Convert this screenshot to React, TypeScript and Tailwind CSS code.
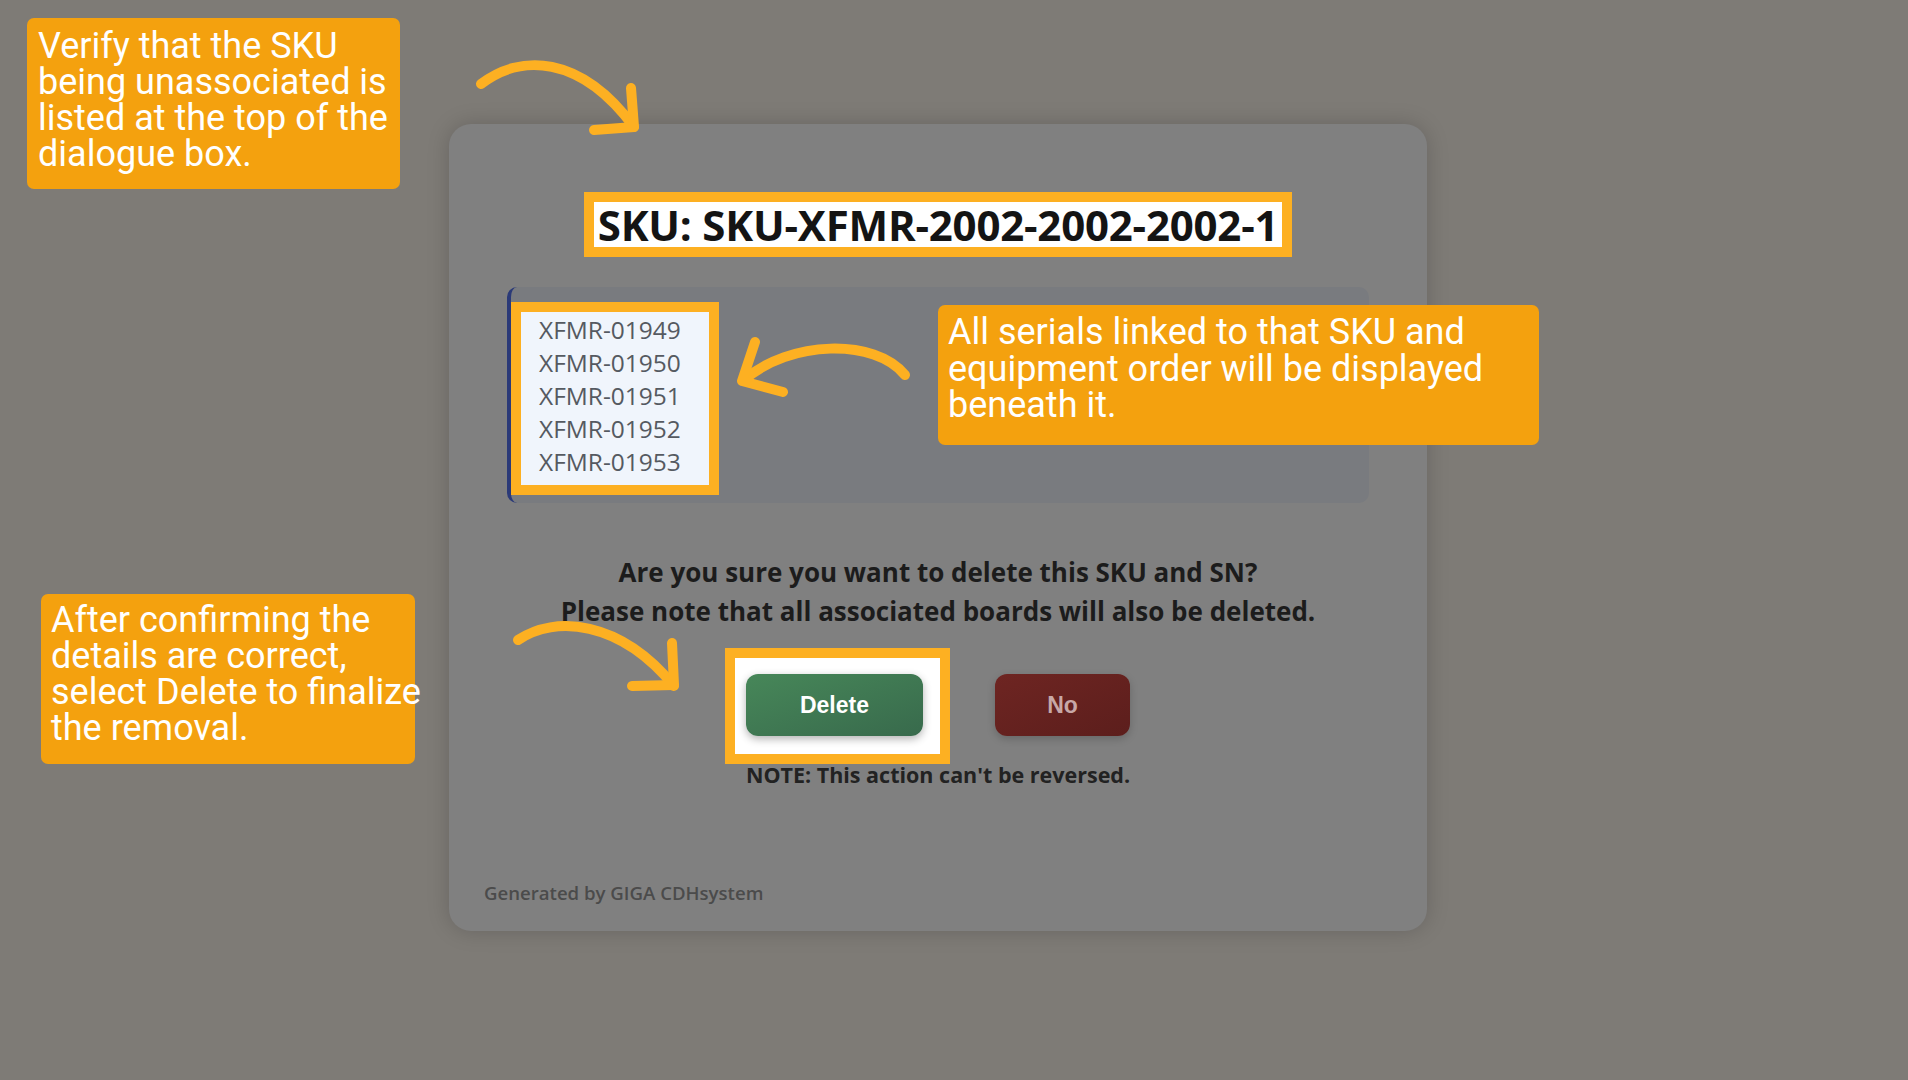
import React from "react";

const serials = ["XFMR-01949", "XFMR-01950", "XFMR-01951", "XFMR-01952", "XFMR-01953"];

function Arrows() {
  return (
    <svg
      className="absolute inset-0 pointer-events-none z-20"
      width="1908"
      height="1080"
      viewBox="0 0 1908 1080"
      fill="none"
    >
      <g stroke="#fdb022" strokeWidth="10" strokeLinecap="round" strokeLinejoin="round">
        <path d="M481 84 C520 54 580 54 634 127" />
        <path d="M594 130 L634 127 L631 88" />
        <path d="M905 375 C875 338 790 340 744 380" />
        <path d="M755 342 L742 381 L783 392" />
        <path d="M518 640 C555 615 620 620 674 686" />
        <path d="M632 686 L674 685 L672 643" />
      </g>
    </svg>
  );
}

export default function App() {
  return (
    <div className="relative w-[1908px] h-[1080px] overflow-hidden bg-[#7e7b76] font-['Open_Sans',sans-serif]">
      <div className="flex pt-[124px] pl-[449px]">
        <div className="w-[978px] h-[807px] rounded-[22px] bg-[#808080] shadow-[0_0_22px_rgba(0,0,0,0.18)] flex flex-col items-center pt-[68px]">
          <div className="border-[10px] border-[#fdb022] bg-white px-[4px] py-[1px]">
            <div className="text-[42px] leading-[43px] font-bold text-[#141414] whitespace-nowrap tracking-[-0.2px]">
              SKU: SKU-XFMR-2002-2002-2002-1
            </div>
          </div>

          <div className="mt-[30px] w-[862px] h-[216px] rounded-[10px] bg-[#797b7f] border-l-[4px] border-[#2b3a78] pt-[15px]">
            <div className="w-[208px] border-[10px] border-[#fdb022] bg-[#f0f5fc] pl-[18px] pt-[1px] pb-[7px]">
              {serials.map((s) => (
                <div key={s} className="text-[24.5px] leading-[33px] text-[#555a61] whitespace-nowrap">
                  {s}
                </div>
              ))}
            </div>
          </div>

          <div className="mt-[50px] flex flex-col items-center text-[#1c1c1c] font-bold text-[26px] leading-[39px]">
            <div className="whitespace-nowrap">Are you sure you want to delete this SKU and SN?</div>
            <div className="whitespace-nowrap">Please note that all associated boards will also be deleted.</div>
          </div>

          <div className="mt-[43px] flex items-center gap-[72px]">
            <div className="relative">
              <div className="absolute left-[-21px] top-[-26px] w-[225px] h-[116px] border-[10px] border-[#fdb022] bg-white" />
              <button className="relative z-10 w-[177px] h-[62px] rounded-[12px] bg-linear-to-br from-[#478759] to-[#386a4c] text-white font-bold text-[23px] font-['Liberation_Sans',sans-serif] shadow-[0_3px_8px_rgba(0,0,0,0.3)]">
                Delete
              </button>
            </div>
            <button className="w-[135px] h-[62px] rounded-[12px] bg-linear-to-br from-[#6e2522] to-[#5c1e1c] text-[#c7a8a7] font-bold text-[23px] font-['Liberation_Sans',sans-serif] shadow-[0_3px_8px_rgba(0,0,0,0.2)]">
              No
            </button>
          </div>

          <div className="relative z-10 mt-[25px] text-[21.5px] leading-[28px] font-bold text-[#222222] whitespace-nowrap">
            NOTE: This action can't be reversed.
          </div>

          <div className="mt-auto mb-[25px] self-stretch pl-[35px] text-[18.6px] leading-[26px] font-semibold text-[#4b4b4b]">
            Generated by GIGA CDHsystem
          </div>
        </div>
      </div>

      <div className="absolute left-[27px] top-[18px] w-[373px] h-[171px] rounded-[7px] bg-[#f4a10e] pl-[11px] pt-[10px] text-white font-['Roboto',sans-serif] text-[36px] leading-[36px] whitespace-nowrap z-30">
        <div>Verify that the SKU</div>
        <div>being unassociated is</div>
        <div>listed at the top of the</div>
        <div>dialogue box.</div>
      </div>

      <div className="absolute left-[938px] top-[305px] w-[601px] h-[140px] rounded-[7px] bg-[#f4a10e] pl-[10px] pt-[9px] text-white font-['Roboto',sans-serif] text-[36px] leading-[36.5px] whitespace-nowrap z-30">
        <div>All serials linked to that SKU and</div>
        <div>equipment order will be displayed</div>
        <div>beneath it.</div>
      </div>

      <div className="absolute left-[41px] top-[594px] w-[374px] h-[170px] rounded-[7px] bg-[#f4a10e] pl-[10px] pt-[8px] text-white font-['Roboto',sans-serif] text-[36px] leading-[36px] whitespace-nowrap z-30">
        <div>After confirming the</div>
        <div>details are correct,</div>
        <div>select Delete to finalize</div>
        <div>the removal.</div>
      </div>

      <Arrows />
    </div>
  );
}
